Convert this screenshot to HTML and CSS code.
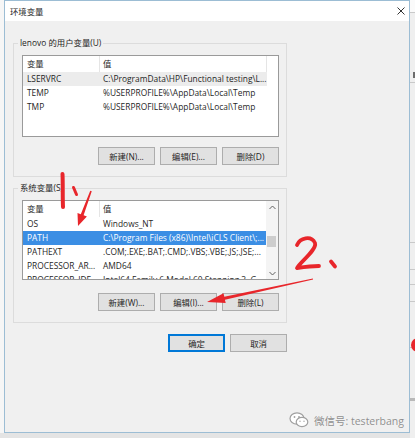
FILE: index.html
```html
<!DOCTYPE html>
<html lang="zh-CN">
<head>
  <meta charset="UTF-8">
  <meta name="viewport" content="width=device-width, initial-scale=1.0">
  <title>环境变量</title>
  <link rel="stylesheet" href="styles.css">
</head>
<body>
  <div class="screen">
    <div class="edge"></div>

    <div class="dialog">
      <div class="titlebar">
        <span>环境变量</span>
        <svg class="close" width="8" height="8" viewBox="0 0 8 8">
          <path d="M0.5 0.5 L7.5 7.5 M7.5 0.5 L0.5 7.5" stroke="#333" stroke-width="1" fill="none"/>
        </svg>
      </div>

      <div class="dialog-body">
        <fieldset class="group">
          <legend>lenovo 的用户变量(U)</legend>
          <div class="list list-user">
            <div class="list-main">
              <div class="row head"><span class="c1">变量</span><span class="c2">值</span></div>
              <div class="row soft"><span class="c1">LSERVRC</span><span class="c2">C:\ProgramData\HP\Functional testing\L...</span></div>
              <div class="row"><span class="c1">TEMP</span><span class="c2">%USERPROFILE%\AppData\Local\Temp</span></div>
              <div class="row"><span class="c1">TMP</span><span class="c2">%USERPROFILE%\AppData\Local\Temp</span></div>
            </div>
          </div>
          <div class="buttons buttons-user">
            <button class="btn">新建(N)...</button>
            <button class="btn">编辑(E)...</button>
            <button class="btn">删除(D)</button>
          </div>
        </fieldset>

        <fieldset class="group group-sys">
          <legend>系统变量(S)</legend>
          <div class="list list-sys">
            <div class="list-main">
              <div class="row head"><span class="c1">变量</span><span class="c2">值</span></div>
              <div class="row"><span class="c1">OS</span><span class="c2">Windows_NT</span></div>
              <div class="row selected"><span class="c1">PATH</span><span class="c2">C:\Program Files (x86)\Intel\iCLS Client\;...</span></div>
              <div class="row"><span class="c1">PATHEXT</span><span class="c2">.COM;.EXE;.BAT;.CMD;.VBS;.VBE;.JS;.JSE;...</span></div>
              <div class="row"><span class="c1">PROCESSOR_AR...</span><span class="c2">AMD64</span></div>
              <div class="row"><span class="c1">PROCESSOR_IDE...</span><span class="c2">Intel64 Family 6 Model 60 Stepping 3, G...</span></div>
            </div>
            <div class="scrollbar">
              <div class="arrow">
                <svg width="7" height="5" viewBox="0 0 7 5"><path d="M0.5 4 L3.5 1 L6.5 4" stroke="#606060" fill="none"/></svg>
              </div>
              <div class="track"><div class="thumb"></div></div>
              <div class="arrow">
                <svg width="7" height="5" viewBox="0 0 7 5"><path d="M0.5 1 L3.5 4 L6.5 1" stroke="#606060" fill="none"/></svg>
              </div>
            </div>
          </div>
          <div class="buttons buttons-sys">
            <button class="btn">新建(W)...</button>
            <button class="btn">编辑(I)...</button>
            <button class="btn">删除(L)</button>
          </div>
        </fieldset>

        <div class="footer">
          <button class="btn btn-default">确定</button>
          <button class="btn">取消</button>
        </div>
      </div>
    </div>

    <div class="behind">
      <div class="seg s1"></div>
      <div class="seg s2"><span class="tick"></span></div>
      <div class="seg s3"></div>
      <div class="seg s4"></div>
      <div class="seg s5"></div>
      <div class="seg s6"></div>
      <div class="seg s7"></div>
      <div class="seg s8"></div>
    </div>

    <!-- hand drawn red notes on top of the screenshot -->
    <svg class="marks" width="415" height="438" viewBox="0 0 415 438">
      <g stroke="#e8262b" stroke-linecap="round" stroke-linejoin="round" fill="none">
        <path d="M62.5 174 C63 184 62.5 196 63 207" stroke-width="4"/>
        <path d="M73.5 187.5 L76.5 194.5" stroke-width="3"/>
        <path d="M297 245 C300 238 311 235 315 243 C317 250 300 262 297 268 C304 267 312 266 319 266" stroke-width="3.8"/>
        <path d="M331 261.5 L335 266.5" stroke-width="3.8"/>
      </g>
      <g fill="#e8262b">
        <polygon points="90.25,190.7 80.8,214.2 77.5,213 78,226 86.9,216.4 83.6,215.2 91.75,191.3"/>
        <polygon points="312.9,278.4 224.3,296.7 223.5,293.3 207,302 225.7,303.1 224.9,299.7 313.1,279.6"/>
        <circle cx="418" cy="345" r="7"/>
      </g>
    </svg>

    <div class="watermark">
      <svg width="20" height="16" viewBox="0 0 20 16">
        <ellipse cx="8" cy="6.5" rx="7" ry="5.7" fill="#fff" stroke="#a0a0a0" stroke-width="1.2"/>
        <ellipse cx="13" cy="10" rx="5.8" ry="4.6" fill="#fff" stroke="#a0a0a0" stroke-width="1.2"/>
        <circle cx="5.5" cy="5" r="0.9" fill="#a0a0a0"/>
        <circle cx="10" cy="5" r="0.9" fill="#a0a0a0"/>
        <circle cx="11" cy="9.3" r="0.7" fill="#a0a0a0"/>
        <circle cx="15" cy="9.3" r="0.7" fill="#a0a0a0"/>
      </svg>
      <span>微信号: testerbang</span>
    </div>
  </div>
</body>
</html>
```

FILE: styles.css
```css
body {
  margin: 0;
  background: #e4e4e4;
  font-family: "Open Sans", "Noto Sans CJK SC", sans-serif;
  font-size: 8.4px;
  color: #1f1f1f;
}

.screen {
  position: relative;
  display: flex;
  width: 415px;
  height: 438px;
  overflow: hidden;
}

.edge {
  width: 4px;
  height: 433px;
  background: #f6f6f6;
}

.dialog {
  box-sizing: border-box;
  display: flex;
  flex-direction: column;
  width: 406px;
  height: 433px;
  border: 1px solid #9cbdd4;
  background: #f0f0f0;
}

.titlebar {
  display: flex;
  align-items: center;
  justify-content: space-between;
  height: 20px;
  padding: 0 4px 0 5px;
  background: #fff;
}

.dialog-body {
  padding: 16px 0 0 8px;
}

/* group boxes */
.group {
  box-sizing: border-box;
  width: 274px;
  min-width: 0;
  margin: 0;
  padding: 6px 7px 11px 8px;
  border: 1px solid #dcdcdc;
}
.group legend {
  margin-left: -4px;
  padding: 0 2px;
  line-height: 12px;
}
.group-sys {
  margin-top: 5px;
}

/* list views */
.list {
  box-sizing: border-box;
  display: flex;
  width: 257px;
  border: 1px solid #9a9a9a;
  background: #fff;
  overflow: hidden;
}
.list-user {
  height: 82px;
}
.list-sys {
  height: 80px;
}
.list-main {
  flex: 1;
  overflow: hidden;
}
.row {
  display: flex;
  width: 244px;
  height: 14px;
  line-height: 14px;
  white-space: nowrap;
}
.row.head {
  height: 16px;
  line-height: 16px;
}
.c1 {
  box-sizing: border-box;
  width: 77px;
  padding-left: 4px;
  overflow: hidden;
}
.c2 {
  box-sizing: border-box;
  width: 167px;
  padding-left: 3px;
  overflow: hidden;
}
.head .c1,
.head .c2 {
  border-right: 1px solid #e5e5e5;
}
.row.soft {
  background: #ececec;
}
.row.selected {
  background: #3b8ee4;
  color: #fff;
}

.scrollbar {
  display: flex;
  flex-direction: column;
  width: 12px;
  background: #f4f4f4;
}
.scrollbar .arrow {
  display: flex;
  align-items: center;
  justify-content: center;
  height: 12px;
}
.scrollbar .track {
  flex: 1;
}
.scrollbar .thumb {
  width: 9px;
  height: 11px;
  margin: 23px 0 0 1px;
  background: #cdcdcd;
}

/* buttons */
.buttons {
  display: flex;
  justify-content: flex-end;
  gap: 5px;
}
.buttons-user {
  margin-top: 10px;
}
.buttons-sys {
  margin-top: 13px;
}
.btn {
  box-sizing: border-box;
  width: 57px;
  height: 18px;
  padding: 0;
  border: 1px solid #adadad;
  background: #e1e1e1;
  font: inherit;
  color: inherit;
}
.btn-default {
  border-color: #0078d7;
  box-shadow: inset 0 0 0 1px #0078d7;
}
.footer {
  display: flex;
  justify-content: flex-end;
  gap: 5px;
  width: 274px;
  margin-top: 11px;
}

/* window behind the dialog */
.behind {
  display: flex;
  flex-direction: column;
  width: 5px;
  background: #efefef;
}
.seg {
  border-bottom: 1px solid #c9c9c9;
}
.s1 { height: 12px; background: #fafafa; }
.s2 { height: 69px; display: flex; flex-direction: column; justify-content: flex-end; }
.tick { height: 6px; margin: 0 0 4px 3px; background: #6d6d6d; }
.s3 { height: 159px; }
.s4 { height: 26px; }
.s5 { height: 14px; }
.s6 { height: 16px; }
.s7 { height: 45px; }
.s8 { height: 50px; border-bottom-width: 3px; border-color: #b9b9b9; }

/* overlays */
.marks {
  position: absolute;
  left: 0;
  top: 0;
  pointer-events: none;
}

.watermark {
  position: absolute;
  left: 289px;
  top: 412px;
  display: flex;
  align-items: center;
  gap: 5px;
  font-size: 10.5px;
  color: #8e8e8e;
  text-shadow: 0 0 1px #fff;
}
```
